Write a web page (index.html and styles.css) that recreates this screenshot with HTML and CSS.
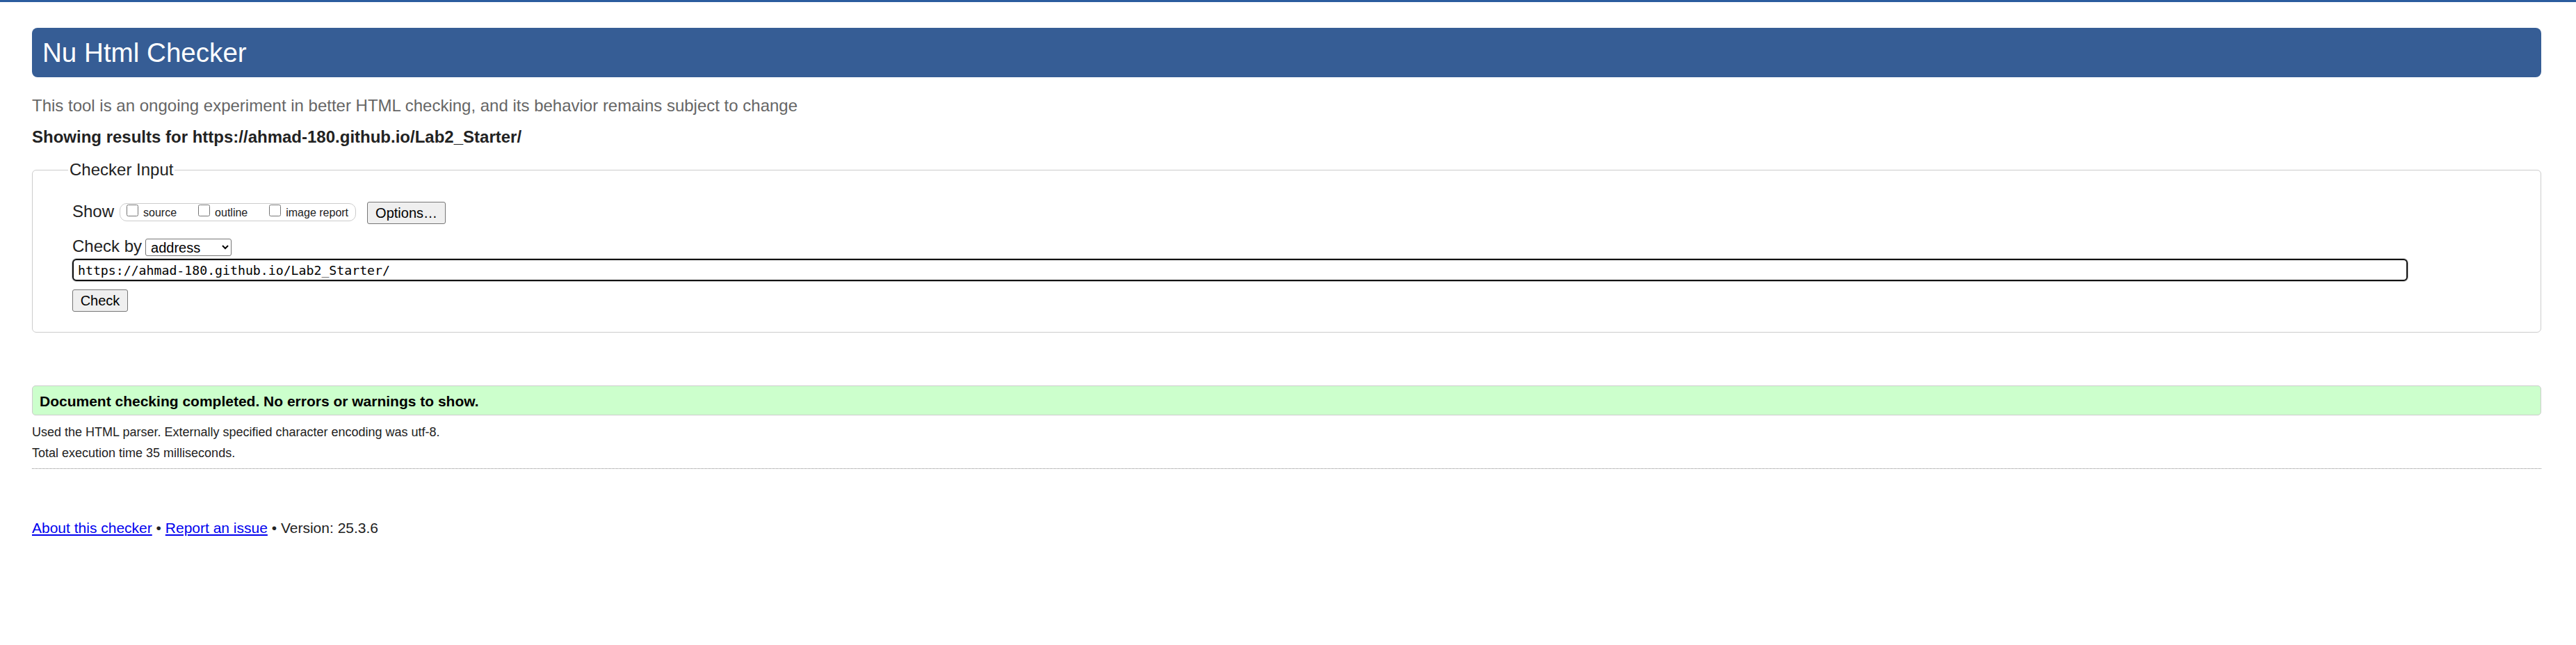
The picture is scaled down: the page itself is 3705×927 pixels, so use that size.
FILE: index.html
```html
<!DOCTYPE html>
<html lang="en">
<head>
<meta charset="utf-8">
<title>Showing results for https://ahmad-180.github.io/Lab2_Starter/ - Nu Html Checker</title>
<link rel="stylesheet" href="styles.css">
</head>
<body>
<h1 class="title">Nu Html Checker</h1>
<p class="about">This tool is an ongoing experiment in better HTML checking, and its behavior remains subject to change</p>
<p class="showing">Showing results for https://ahmad-180.github.io/Lab2_Starter/</p>
<form class="checker">
  <fieldset class="input-box">
    <legend class="input-legend">Checker Input</legend>
    <div class="show-row">
      <span class="row-label">Show</span>
      <span class="show-group">
        <label class="opt"><input type="checkbox" class="cb"><span class="opt-text">source</span></label>
        <label class="opt"><input type="checkbox" class="cb"><span class="opt-text">outline</span></label>
        <label class="opt"><input type="checkbox" class="cb"><span class="opt-text">image report</span></label>
      </span>
      <button type="button" class="btn btn-options">Options…</button>
    </div>
    <div class="by-row">
      <label class="row-label" for="docselect">Check by</label>
      <select class="select" id="docselect">
        <option>address</option>
        <option>file upload</option>
        <option>text input</option>
      </select>
    </div>
    <input class="url" type="url" value="https://ahmad-180.github.io/Lab2_Starter/">
    <div class="submit-row"><button class="btn btn-check" type="button">Check</button></div>
  </fieldset>
</form>
<div class="success">Document checking completed. No errors or warnings to show.</div>
<p class="details">Used the HTML parser. Externally specified character encoding was utf-8.</p>
<p class="details">Total execution time 35 milliseconds.</p>
<hr class="sep">
<p class="footer"><a class="link" href="#">About this checker</a> • <a class="link" href="#">Report an issue</a> • Version: 25.3.6</p>
</body>
</html>
```

FILE: styles.css
```css
html {
  border-top: 3px solid #2b5c9e;
  background: #fff;
}

body {
  margin: 0;
  padding: 37px 50px 0 46px;
  font-family: "Liberation Sans", Arial, Helvetica, sans-serif;
  color: #222;
}

.title {
  margin: 0;
  background: #365d95;
  color: #fff;
  font-weight: normal;
  font-size: 38.6px;
  line-height: 44px;
  padding: 14px 15px 13px;
  border-radius: 8px;
}

.about {
  margin: 27px 0 0;
  font-size: 24px;
  line-height: 28px;
  color: #666;
}

.showing {
  margin: 17px 0 0;
  font-size: 24px;
  line-height: 28px;
  font-weight: bold;
}

.checker {
  margin: 19px 0 0;
}

.input-box {
  margin: 0;
  border: 1px solid #cccccc;
  border-radius: 6px;
  padding: 32px 57px 29px 57px;
  min-inline-size: 0;
}

.input-legend {
  font-size: 24px;
  line-height: 28px;
  padding: 0 2px;
  margin-left: -6px;
}

.show-row {
  display: flex;
  align-items: flex-start;
  height: 32px;
}

.row-label {
  font-size: 24px;
  line-height: 28px;
}

.show-group {
  display: flex;
  align-items: flex-start;
  gap: 31px;
  box-sizing: border-box;
  height: 26px;
  margin: 2px 0 0 8px;
  padding: 0 10px 0 9px;
  border: 1px solid #cccccc;
  border-radius: 10px;
}

.opt {
  display: flex;
  align-items: flex-start;
  font-size: 16px;
}

.cb {
  width: 17px;
  height: 17px;
  margin: 1px 7px 0 0;
}

.opt-text {
  line-height: 18px;
  margin-top: 4px;
}

.btn {
  box-sizing: border-box;
  height: 32px;
  padding: 0;
  font-family: "Liberation Sans", Arial, Helvetica, sans-serif;
  font-size: 20px;
  color: #000;
  background: #efefef;
  border: 1px solid #767676;
  border-radius: 3px;
}

.btn-options {
  width: 113px;
  margin-left: 16px;
}

.by-row {
  display: flex;
  align-items: flex-end;
  margin-top: 18px;
}

.select {
  box-sizing: border-box;
  width: 124px;
  height: 25px;
  margin: 0 0 0 5px;
  padding: 0 0 0 3px;
  font-family: "Liberation Sans", Arial, Helvetica, sans-serif;
  font-size: 20px;
  color: #000;
  background: #fff;
  border: 1px solid #767676;
  border-radius: 3px;
}

.url {
  display: block;
  box-sizing: border-box;
  width: calc(100% - 134px);
  height: 32px;
  margin: 4px 0 0;
  padding: 0 6px;
  font-family: "DejaVu Sans Mono", "Liberation Mono", monospace;
  font-size: 18.2px;
  color: #000;
  background: #fff;
  border: 2px solid #111;
  border-radius: 6px;
  box-shadow: 0 0 0 1px #c4c4c4;
  outline: none;
}

.submit-row {
  margin-top: 12px;
}

.btn-check {
  width: 80px;
}

.success {
  margin: 76px 0 0;
  padding: 10px 10px 7px;
  font-size: 21px;
  line-height: 24px;
  font-weight: bold;
  color: #000;
  background: #ccffcc;
  border: 1px solid #cccccc;
  border-radius: 5px;
}

.details {
  margin: 0;
  font-size: 18px;
  line-height: 30px;
}

.success + .details {
  margin-top: 9px;
}

.sep {
  height: 0;
  margin: 7px 0 0;
  border: 0;
  border-top: 1px dotted #888;
}

.footer {
  margin: 73px 0 0;
  font-size: 21px;
  line-height: 24px;
}

.link {
  color: #0000ee;
  text-decoration: underline;
}
```
